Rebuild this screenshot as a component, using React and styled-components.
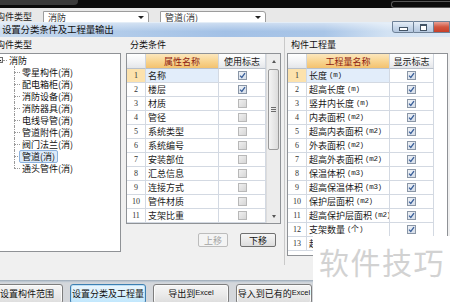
import React from "react";
import styled, { createGlobalStyle } from "styled-components";

const GlobalStyle = createGlobalStyle`
  html, body {
    margin: 0;
    padding: 0;
    background: #fff;
    overflow: hidden;
  }
  body {
    font-family: "Noto Sans CJK SC", "Liberation Sans", sans-serif;
  }
`;

const Screen = styled.div`
  position: relative;
  width: 450px;
  height: 302px;
  overflow: hidden;
  display: flex;
  flex-direction: column;
  background: #f0f0f0;
  font-size: 9px;
  line-height: 1;
  color: #1a1a1a;
`;

const TopStrip = styled.div`
  flex: none;
  height: 8px;
  background: #0b0b0b;
  display: flex;
  justify-content: space-between;
`;

const DarkTab = styled.div`
  width: 78px;
  height: 5px;
  background: #3a3a3a;
  border-bottom-right-radius: 4px;
`;

const GhostFrame = styled.div`
  width: 58px;
  height: 5px;
  margin-top: 1px;
  border: 1px solid #555;
  border-right: none;
  border-radius: 3px 0 0 3px;
`;

const ComboRow = styled.div`
  flex: none;
  height: 14px;
  background: #e8e8e8;
  display: flex;
  align-items: flex-start;
  overflow: hidden;
`;

const FieldLabel = styled.span`
  margin: 4px 11px 0 -4px;
  width: 36px;
  white-space: nowrap;
  color: #222;
`;

const Combo = styled.div`
  margin: 3px 0 0 ${(p) => p.$gap || 0}px;
  width: ${(p) => p.$w}px;
  height: 13px;
  box-sizing: border-box;
  border: 1px solid #9c9c9c;
  border-radius: 0 3px 0 0;
  background: #fff;
  padding: 1px 0 0 4px;
  display: flex;
  justify-content: space-between;
  color: #333;
`;

const ComboArrow = styled.span`
  width: 0;
  height: 0;
  margin: 3px 4px 0 0;
  border-left: 3px solid transparent;
  border-right: 3px solid transparent;
  border-top: 3px solid #222;
`;

const TitleBar = styled.div`
  flex: none;
  height: 15px;
  display: flex;
  align-items: center;
  padding-left: 2px;
  background:
    linear-gradient(180deg, rgba(255, 255, 255, 0.45), rgba(255, 255, 255, 0) 60%),
    linear-gradient(90deg, #cadcf0 0%, #b4cdea 22%, #a3c1e6 50%, #a9c5e7 72%, #d2e2f3 86%, #dbe7f4 100%);
  border-top: 1px solid #e3edf7;
  box-sizing: border-box;
`;

const TitleText = styled.span`
  font-size: 9.5px;
  color: #111;
  letter-spacing: -0.2px;
`;

const WinButtons = styled.div`
  margin-left: auto;
  align-self: flex-start;
  margin-top: -2px;
  display: flex;
  height: 12px;
`;

const WinButton = styled.div`
  width: ${(p) => p.$w}px;
  box-sizing: border-box;
  border: 1px solid #6e8197;
  border-left-width: ${(p) => (p.$first ? 1 : 0)}px;
  border-radius: ${(p) => (p.$first ? "0 0 0 3px" : "0")};
  background: ${(p) =>
    p.$close
      ? "linear-gradient(180deg, #e8a196 0%, #d2563f 50%, #c8402a 100%)"
      : "linear-gradient(180deg, #e6eef7 0%, #c9d8ea 50%, #b5c8df 100%)"};
  display: flex;
  align-items: center;
  justify-content: center;
`;

const MinGlyph = styled.span`
  width: 7px;
  height: 2px;
  margin-top: 3px;
  background: #fff;
  border: 1px solid #435466;
`;

const RestoreGlyph = styled.span`
  width: 5px;
  height: 4px;
  border: 1px solid #435466;
  border-top-width: 2px;
  background: #fff;
`;

const Body = styled.div`
  flex: none;
  height: 243px;
  display: flex;
  background: #f0f0f0;
`;

const Column = styled.div`
  flex: none;
  width: ${(p) => p.$w}px;
  margin-left: ${(p) => p.$ml || 0}px;
  display: flex;
  flex-direction: column;
`;

const GroupLabel = styled.div`
  height: 16px;
  padding: 3px 0 0 ${(p) => p.$indent || 0}px;
  box-sizing: border-box;
  white-space: nowrap;
  color: #111;
`;

const TreeBox = styled.div`
  width: 121px;
  height: 199px;
  box-sizing: border-box;
  border: 1px solid #8f9296;
  border-left: none;
  background: #fff;
  padding-top: 0;
`;

const TreeRow = styled.div`
  height: 12px;
  display: flex;
  align-items: center;
`;

const Expander = styled.span`
  width: 6px;
  height: 6px;
  margin-left: -3px;
  box-sizing: border-box;
  border: 1px solid #6e6e6e;
  background: linear-gradient(#fff, #ddd);
  display: flex;
  align-items: center;
  justify-content: center;
  &::after {
    content: "";
    width: 2px;
    height: 1px;
    background: #222;
  }
`;

const Dots = styled.span`
  width: ${(p) => p.$w}px;
  height: 0;
  border-top: 1px dotted #9a9a9a;
  margin-right: 1px;
`;

const ChildList = styled.div`
  margin-left: 14px;
`;

const ChildItem = styled.div`
  position: relative;
  height: 12px;
  display: flex;
  align-items: center;
  &::before {
    content: "";
    position: absolute;
    left: 0;
    top: 0;
    height: ${(p) => (p.$last ? "6px" : "12px")};
    border-left: 1px dotted #9a9a9a;
  }
`;

const TreeText = styled.span`
  white-space: nowrap;
  padding: 1px 2px;
  margin-left: -2px;
  border: 1px solid ${(p) => (p.$selected ? "#8db2dd" : "transparent")};
  border-radius: 2px;
  background: ${(p) => (p.$selected ? "#dceaf9" : "transparent")};
  color: #111;
`;

const Grid = styled.div`
  width: ${(p) => p.$w}px;
  height: ${(p) => p.$h}px;
  margin-left: ${(p) => p.$ml || 0}px;
  box-sizing: border-box;
  border: 1px solid #8f9296;
  background: #fff;
  display: flex;
  overflow: hidden;
`;

const GridTable = styled.div`
  display: flex;
  flex-direction: column;
`;

const HeadRow = styled.div`
  display: flex;
  height: 15px;
`;

const HeadCell = styled.div`
  width: ${(p) => p.$w}px;
  box-sizing: border-box;
  border-right: 1px solid #cfd5de;
  border-bottom: 1px solid #b9c0ca;
  display: flex;
  align-items: center;
  justify-content: center;
  color: ${(p) => (p.$accent ? "#8e1c12" : "#1a1a1a")};
  background: ${(p) =>
    p.$accent
      ? "linear-gradient(180deg, #fce7bd 0%, #f8d38e 55%, #f3c26f 100%)"
      : "linear-gradient(180deg, #ffffff 0%, #f1f2f4 60%, #e4e6ea 100%)"};
`;

const Row = styled.div`
  display: flex;
  height: 14px;
`;

const Cell = styled.div`
  width: ${(p) => p.$w}px;
  box-sizing: border-box;
  border-right: 1px solid #d3d9e2;
  border-bottom: 1px solid #d3d9e2;
  display: flex;
  align-items: center;
  justify-content: ${(p) => (p.$center ? "center" : "flex-start")};
  padding-left: ${(p) => (p.$center ? 0 : 2)}px;
  white-space: nowrap;
  overflow: hidden;
  background: ${(p) => p.$bg || "#fff"};
`;

const RowNum = styled.span`
  font-family: "Liberation Serif", serif;
  font-size: 8px;
  color: #333;
`;

const Unit = styled.span`
  font-family: "Liberation Mono", monospace;
  font-size: 7.5px;
  margin-left: 2px;
  letter-spacing: -0.3px;
`;

const Check = styled.span`
  width: 9px;
  height: 9px;
  box-sizing: border-box;
  border: 1px solid ${(p) => (p.$on ? "#8a96a6" : "#b8b8b8")};
  background: ${(p) =>
    p.$on
      ? "linear-gradient(135deg, #eef2f7 0%, #d5dde8 100%)"
      : "linear-gradient(135deg, #f0f0f0 0%, #d6d6d6 100%)"};
  display: flex;
  align-items: center;
  justify-content: center;
`;

const ScrollBar = styled.div`
  width: 14px;
  display: flex;
  flex-direction: column;
  background: #ececec;
  border-left: 1px solid #dcdcdc;
  box-sizing: border-box;
`;

const ScrollArrow = styled.div`
  height: ${(p) => p.$h}px;
  flex: none;
  display: flex;
  align-items: center;
  justify-content: center;
  &::after {
    content: "";
    border-left: 2.5px solid transparent;
    border-right: 2.5px solid transparent;
    ${(p) => (p.$down ? "border-top" : "border-bottom")}: 3px solid #555;
  }
`;

const ScrollTrack = styled.div`
  flex: 1;
  padding: 0 1px;
`;

const Thumb = styled.div`
  height: 81px;
  box-sizing: border-box;
  border: 1px solid #9a9a9a;
  border-radius: 2px;
  background: linear-gradient(90deg, #f4f4f4 0%, #dcdcdc 100%);
  display: flex;
  flex-direction: column;
  align-items: center;
  justify-content: center;
  gap: 1px;
`;

const Grip = styled.span`
  width: 5px;
  height: 1px;
  background: #6c6c6c;
`;

const MoveRow = styled.div`
  display: flex;
  justify-content: flex-end;
  gap: 12px;
  margin: 9px 8px 0 0;
`;

const MoveButton = styled.div`
  width: ${(p) => p.$w}px;
  height: 14px;
  box-sizing: border-box;
  border: 1px solid ${(p) => (p.$disabled ? "#bcbcbc" : "#707070")};
  border-radius: 2px;
  background: ${(p) =>
    p.$disabled ? "#f4f4f4" : "linear-gradient(180deg, #f6f6f6 0%, #dddddd 100%)"};
  color: ${(p) => (p.$disabled ? "#a3a3a3" : "#111")};
  display: flex;
  align-items: center;
  justify-content: center;
`;

const MiddleColumn = styled(Column)`
  height: 228px;
  border-right: 1px solid #c9c9c9;
`;

const BottomEdge = styled.div`
  flex: none;
  height: 3px;
  background: linear-gradient(180deg, #9aa8b6 0%, #c3ccd5 60%, #d6d9dd 100%);
`;

const ButtonBar = styled.div`
  flex: none;
  height: 19px;
  display: flex;
  gap: 7px;
  padding-top: 1px;
  box-sizing: border-box;
  background: #d4d7db;
`;

const BarButton = styled.div`
  flex: none;
  width: ${(p) => p.$w || 76}px;
  margin-left: ${(p) => p.$ml || 0}px;
  height: 20px;
  box-sizing: border-box;
  border: 1px solid ${(p) => (p.$active ? "#3c7fb1" : "#7d7d7d")};
  border-radius: 3px;
  box-shadow: ${(p) => (p.$active ? "inset 0 0 0 1px #bfe0f6" : "inset 0 0 0 1px #fbfbfb")};
  background: ${(p) =>
    p.$active
      ? "linear-gradient(180deg, #eaf6fd 0%, #d9f0fc 50%, #bee6fd 100%)"
      : "linear-gradient(180deg, #f5f5f5 0%, #ebebeb 50%, #dddddd 100%)"};
  display: flex;
  align-items: center;
  justify-content: center;
  padding-bottom: 2px;
  white-space: nowrap;
  color: #111;
`;

const Latin = styled.span`
  font-family: "Liberation Sans", sans-serif;
  font-size: 7.5px;
`;

const Watermark = styled.div`
  position: absolute;
  left: 313px;
  top: 236px;
  right: 0;
  bottom: 0;
  background: #fff;
  color: #d2d2d2;
  font-size: 30px;
  letter-spacing: 1.5px;
  padding: 10px 0 0 6px;
  box-sizing: border-box;
  white-space: nowrap;
`;

const CheckMark = () => (
  <svg width="7" height="7" viewBox="0 0 7 7">
    <path d="M1 3.6 L2.8 5.4 L6 1.2" fill="none" stroke="#3a5f9a" strokeWidth="1.3" />
  </svg>
);

const treeChildren = [
  "零星构件(消)",
  "配电箱柜(消)",
  "消防设备(消)",
  "消防器具(消)",
  "电线导管(消)",
  "管道附件(消)",
  "阀门法兰(消)",
  "管道(消)",
  "通头管件(消)",
];

const conditions = [
  ["名称", true],
  ["楼层", true],
  ["材质", false],
  ["管径", false],
  ["系统类型", false],
  ["系统编号", false],
  ["安装部位", false],
  ["汇总信息", false],
  ["连接方式", false],
  ["管件材质", false],
  ["支架比重", false],
];

const quantities = [
  ["长度", "(m)"],
  ["超高长度", "(m)"],
  ["竖井内长度", "(m)"],
  ["内表面积", "(m2)"],
  ["超高内表面积", "(m2)"],
  ["外表面积", "(m2)"],
  ["超高外表面积", "(m2)"],
  ["保温体积", "(m3)"],
  ["超高保温体积", "(m3)"],
  ["保护层面积", "(m2)"],
  ["超高保护层面积", "(m2)"],
  ["支架数量", "(个)"],
  ["超高支架数量", "(个)"],
];

const App = () => {
  return (
    <Screen>
      <GlobalStyle />
      <TopStrip>
        <DarkTab />
        <GhostFrame />
      </TopStrip>

      <ComboRow>
        <FieldLabel>构件类型</FieldLabel>
        <Combo $w={106}>
          消防
          <ComboArrow />
        </Combo>
        <Combo $w={106} $gap={11}>
          管道(消)
          <ComboArrow />
        </Combo>
      </ComboRow>

      <TitleBar>
        <TitleText>设置分类条件及工程量输出</TitleText>
        <WinButtons>
          <WinButton $w={22} $first>
            <MinGlyph />
          </WinButton>
          <WinButton $w={20}>
            <RestoreGlyph />
          </WinButton>
          <WinButton $w={16} $close />
        </WinButtons>
      </TitleBar>

      <Body>
        <Column $w={121}>
          <GroupLabel $indent={0} style={{ marginLeft: -4 }}>构件类型</GroupLabel>
          <TreeBox>
            <TreeRow>
              <Expander />
              <Dots $w={4} />
              <TreeText>消防</TreeText>
            </TreeRow>
            <ChildList>
              {treeChildren.map((name, i) => (
                <ChildItem key={name} $last={i === treeChildren.length - 1}>
                  <Dots $w={6} />
                  <TreeText $selected={name === "管道(消)"}>{name}</TreeText>
                </ChildItem>
              ))}
            </ChildList>
          </TreeBox>
        </Column>

        <MiddleColumn $w={159} $ml={4}>
          <GroupLabel $indent={5}>分类条件</GroupLabel>
          <Grid $w={155} $h={171} $ml={1}>
            <GridTable>
              <HeadRow>
                <HeadCell $w={19} />
                <HeadCell $w={73} $accent>属性名称</HeadCell>
                <HeadCell $w={47}>使用标志</HeadCell>
              </HeadRow>
              {conditions.map(([name, on], i) => (
                <Row key={name}>
                  <Cell $w={19} $center $bg={i === 0 ? "#fce2ad" : undefined}>
                    <RowNum>{i + 1}</RowNum>
                  </Cell>
                  <Cell $w={73} $bg={i === 0 ? "#e2edfa" : undefined}>{name}</Cell>
                  <Cell $w={47} $center>
                    <Check $on={on}>{on && <CheckMark />}</Check>
                  </Cell>
                </Row>
              ))}
            </GridTable>
            <ScrollBar>
              <ScrollArrow $h={15} />
              <ScrollTrack>
                <Thumb>
                  <Grip />
                  <Grip />
                  <Grip />
                </Thumb>
              </ScrollTrack>
              <ScrollArrow $h={13} $down />
            </ScrollBar>
          </Grid>
          <MoveRow>
            <MoveButton $w={30} $disabled>上移</MoveButton>
            <MoveButton $w={36}>下移</MoveButton>
          </MoveRow>
        </MiddleColumn>

        <Column $w={166} $ml={2}>
          <GroupLabel $indent={4}>构件工程量</GroupLabel>
          <Grid $w={161} $h={203}>
            <GridTable>
              <HeadRow>
                <HeadCell $w={19} />
                <HeadCell $w={83} $accent>工程量名称</HeadCell>
                <HeadCell $w={44}>显示标志</HeadCell>
              </HeadRow>
              {quantities.map(([name, unit], i) => (
                <Row key={name}>
                  <Cell $w={19} $center $bg={i === 0 ? "#fce2ad" : undefined}>
                    <RowNum>{i + 1}</RowNum>
                  </Cell>
                  <Cell $w={83} $bg={i === 0 ? "#e2edfa" : undefined}>
                    {name}
                    <Unit>{unit}</Unit>
                  </Cell>
                  <Cell $w={44} $center>
                    <Check $on>
                      <CheckMark />
                    </Check>
                  </Cell>
                </Row>
              ))}
            </GridTable>
          </Grid>
        </Column>
      </Body>

      <BottomEdge />
      <ButtonBar>
        <BarButton $w={72} $ml={-9}>设置构件范围</BarButton>
        <BarButton $active>设置分类及工程量</BarButton>
        <BarButton>
          导出到<Latin>Excel</Latin>
        </BarButton>
        <BarButton>
          导入到已有的<Latin>Excel</Latin>
        </BarButton>
      </ButtonBar>

      <Watermark>软件技巧</Watermark>
    </Screen>
  );
};

export default App;
